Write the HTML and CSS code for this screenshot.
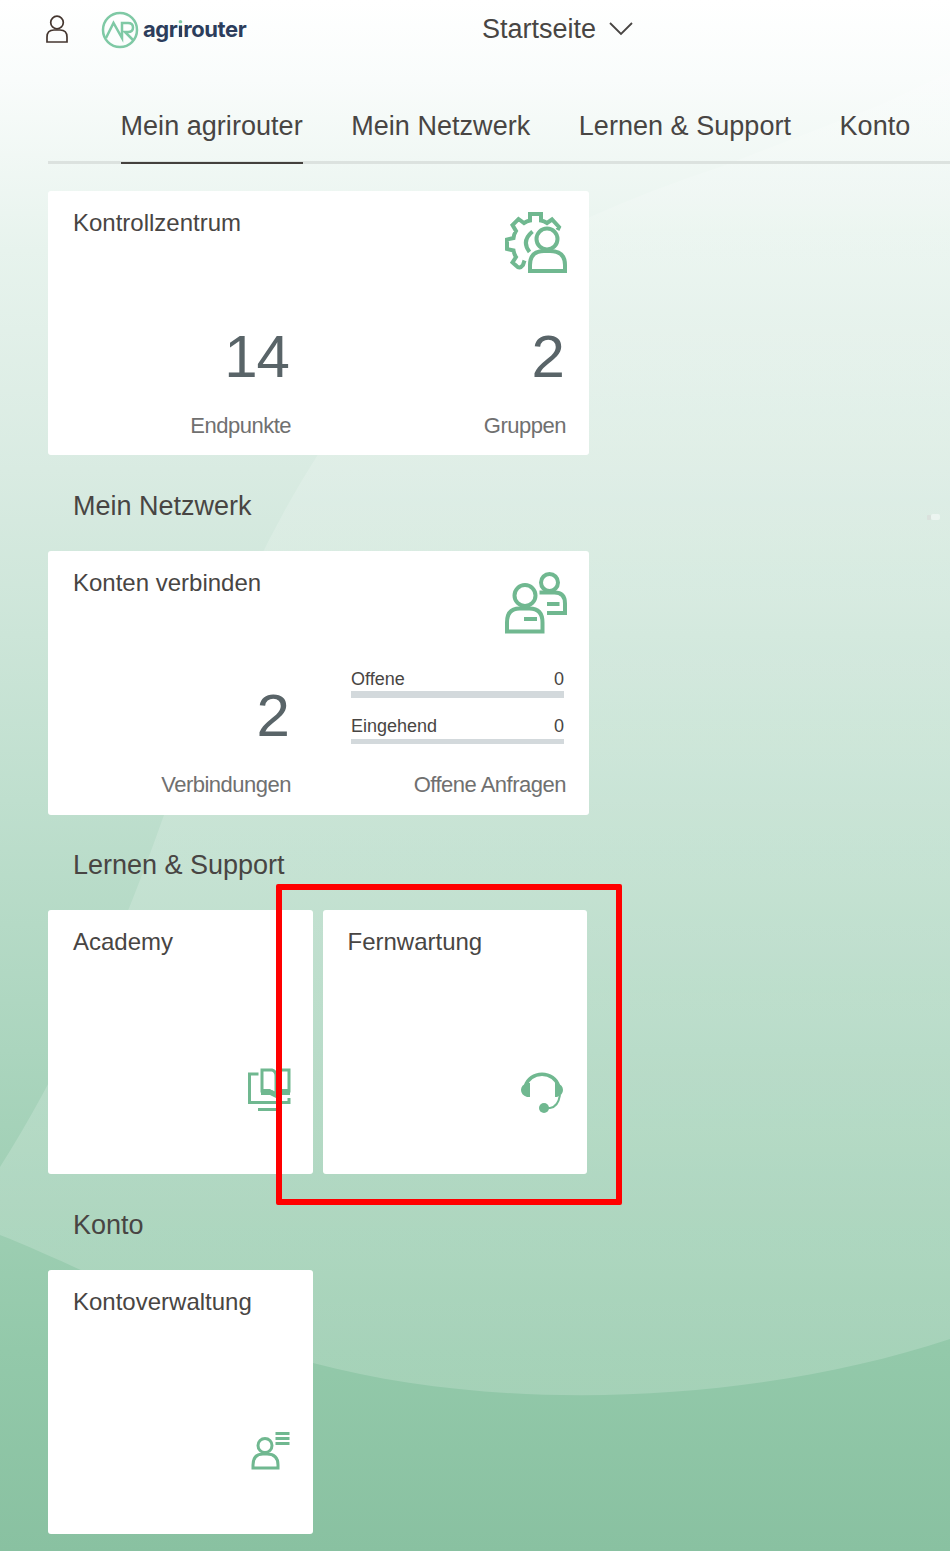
FILE: index.html
```html
<!DOCTYPE html>
<html lang="de">
<head>
<meta charset="utf-8">
<title>agrirouter – Startseite</title>
<link rel="stylesheet" href="styles.css">
</head>
<body>
<div class="page">
  <svg class="backdrop" viewBox="0 0 950 1551" aria-hidden="true">
    <defs>
      <linearGradient id="veil" x1="0" y1="0" x2="0" y2="1">
        <stop offset="0" stop-color="#fff" stop-opacity=".15"/>
        <stop offset="1" stop-color="#fff" stop-opacity=".18"/>
      </linearGradient>
    </defs>
    <path fill="url(#veil)" d="M0 1167Q90 1025 164 815Q225 600 317 456Q405 300 590 217Q650 190 720 167L880 105 950 72V1339C760 1402 510 1415 313 1363C190 1327 80 1266 0 1235Z"/>
    <rect x="931" y="514" width="9" height="6" rx="2" fill="#fff" opacity=".45"/>
    <rect x="927" y="515" width="4" height="5" rx="1" fill="#d9d5d5" opacity=".5"/>
  </svg>
  <header class="header">
    <svg class="user" viewBox="0 0 24 30"><circle cx="12" cy="7.500" r="6.300"/><path d="M2 27v-5q0-7 7-7h6q7 0 7 7v5z"/></svg>
    <div class="brand">
      <svg class="brand-mark" viewBox="0 0 38 38"><circle cx="19" cy="19" r="17"/><path d="M5 27 12.500 12 21 27V12h6q5 0 5 4.500t-5 4.500h-3l8 8"/></svg>
      <span class="brand-name">agr<span class="i">i</span>router</span>
    </div>
    <div class="title">Startseite <svg class="chevron" viewBox="0 0 24 14"><path d="M1 1l11 11L23 1"/></svg></div>
  </header>
  <nav class="tabs">
    <a class="tab active">Mein agrirouter</a><a class="tab">Mein Netzwerk</a><a class="tab">Lernen &amp; Support</a><a class="tab">Konto</a>
  </nav>
  <main class="content">
    <section class="card wide">
      <div class="card-head"><h3>Kontrollzentrum</h3>
        <svg class="icon big" viewBox="0 0 64 64"><path d="M20.500 49.500 19 54Q15.500 58.500 12.500 55L8.500 51.500 12 46Q10 43 9.500 39.500L3 38V28.500L9.500 27Q10 23 12 20L8.500 14 14.500 8 20 12Q23 10 26 9.500V3H37V9.500Q40 10 43 12L48 8.500 55 16 53.500 19M28.500 20.500Q17 30 25.500 41"/><circle cx="43" cy="28" r="10.500"/><path d="M26 60V54Q26 40 40 40H46Q61 40 61 54V60Z"/></svg>
      </div>
      <div class="metrics"><div class="metric"><b>14</b><span>Endpunkte</span></div><div class="metric"><b>2</b><span>Gruppen</span></div></div>
    </section>
    <h2>Mein Netzwerk</h2>
    <section class="card wide">
      <div class="card-head"><h3>Konten verbinden</h3>
        <svg class="icon big" viewBox="0 0 64 64"><circle cx="21" cy="24.500" r="10.500"/><path d="M3 60.500V51.500Q3 37.500 15.500 37.500H25.500Q38.500 37.500 38.500 51.500V60.500ZM20 48H33"/><circle cx="45.500" cy="11.500" r="8.500"/><path d="M35.500 21.500H50.500Q61 21.500 61 32.500V42H43M43 33H55.500"/></svg>
      </div>
      <div class="metrics"><div class="metric"><b>2</b><span>Verbindungen</span></div>
        <div class="metric">
          <div class="bars"><div class="bar tall"><span>Offene</span><span>0</span></div><div class="bar"><span>Eingehend</span><span>0</span></div></div>
          <span>Offene Anfragen</span>
        </div>
      </div>
    </section>
    <h2>Lernen &amp; Support</h2>
    <div class="row">
      <section class="card"><h3>Academy</h3>
        <svg class="icon small" viewBox="0 0 46 46"><path d="M12.500 7H3.500V35.500H43V31M12 42.500H36"/><path d="M16 3H26Q30 4 30 9V27Q26 24 22 24H16ZM30 9Q31 3 36 3H43V24H38Q33 24 30 27"/><path class="solid" d="M15 22h9l6 4 6-4h8v6h-8l-6 3-6-3h-9z"/></svg>
      </section>
      <section class="card"><h3>Fernwartung</h3>
        <svg class="icon small headset" viewBox="0 0 46 46"><path d="M6.500 19A17 15.500 0 0 1 39.500 19"/><path class="cord" d="M41 28Q39 40 31 41H26"/><path class="solid" d="M11 16v14H8Q2 28 2 23t6-7zM36 16v14h2q6-2 6-7t-6-7z"/><circle class="solid" cx="25" cy="41" r="5"/></svg>
      </section>
      <div class="highlight"></div>
    </div>
    <h2>Konto</h2>
    <section class="card"><h3>Kontoverwaltung</h3>
      <svg class="icon small" viewBox="0 0 46 46"><circle cx="19" cy="18.500" r="7"/><path d="M7 41V38Q7 27 17 27H21Q32 27 32 38V41ZM29.500 6.500H43.500M29.500 11.500H43.500M29.500 16.500H43.500"/></svg>
    </section>
  </main>
</div>
</body>
</html>
```
FILE: styles.css
```css
* { box-sizing: border-box; }
body { margin: 0; font-family: "Liberation Sans", Arial, sans-serif; color: #484543; }
h2, h3 { margin: 0; font-weight: 400; }
svg { display: block; fill: none; flex: none; }
.page {
  position: relative; height: 1551px; overflow: hidden;
  background: linear-gradient(180deg, #fff 0, #f9fcfb 80px, #e7f3ed 250px, #d9ebe2 470px, #bfdfce 800px, #abd5be 1050px, #93c9aa 1350px, #89c1a1 1551px);
}
.backdrop { position: absolute; inset: 0; width: 950px; height: 1551px; }
.header { position: relative; height: 60px; display: flex; align-items: center; padding-left: 45px; }
.user { width: 24px; height: 30px; stroke: #44362f; stroke-width: 1.7; }
.brand { display: flex; align-items: center; margin-left: 32px; gap: 4px; width: 381px; }
.brand-mark { width: 38px; height: 38px; stroke: #7fc9a5; stroke-width: 2.5; }
.brand-name { font: 700 22px/30px Inter, sans-serif; color: #2c3d5c; letter-spacing: -.4px; margin-top: -3px; }
.i { background: linear-gradient(#7fc9a5 0 10px, #2c3d5c 10px); -webkit-background-clip: text; background-clip: text; color: transparent; }
.title { display: flex; align-items: center; gap: 13px; font-size: 27px; line-height: 30px; margin-top: -3px; }
.chevron { width: 24px; height: 14px; stroke: #484543; stroke-width: 1.8; }
.tabs { position: relative; display: flex; gap: 48.5px; margin-left: 48px; padding-left: 72.5px; padding-top: 46px; height: 104px; border-bottom: 3px solid #dce2df; }
.tab { height: 58px; padding-top: 5px; font-size: 27px; line-height: 30px; letter-spacing: .04px; white-space: nowrap; }
.active { border-bottom: 2px solid #44403d; }
.content { position: relative; padding: 27px 0 0 48.4px; }
.card { background: #fff; border-radius: 3px; width: 264.5px; height: 264px; padding: 18px 21px 0 24.6px; }
.wide { width: 540.5px; }
h3 { font-size: 24px; line-height: 28px; white-space: nowrap; }
h2 { font-size: 27px; line-height: 30px; height: 95.6px; padding: 35.5px 0 0 24.5px; }
.card-head { display: flex; justify-content: space-between; height: 105.5px; }
.icon { stroke: #70b890; stroke-width: 4; }
.solid { fill: #70b890; stroke: none; }
.big { width: 64px; height: 64px; margin-top: 2px; }
.small { width: 46px; height: 46px; margin: 111px 0 0 auto; stroke-width: 3; }
.headset { margin-right: 1px; stroke-width: 3.5; }
.headset .cord { stroke-width: 2; }
.metrics { display: grid; grid-template-columns: 216px 213px; column-gap: 62px; }
.metric { display: flex; flex-direction: column; align-items: flex-end; }
.metric b { font-size: 60px; line-height: 84px; height: 97.4px; font-weight: 400; color: #596468; letter-spacing: -1px; }
.metric > span { font-size: 22px; line-height: 28px; letter-spacing: -.5px; color: #707070; margin-right: -2px; white-space: nowrap; }
.bars { width: 213px; height: 97.4px; }
.bar { display: flex; justify-content: space-between; height: 28px; font-size: 18px; line-height: 20px; border-bottom: 5px solid #d3d9dc; margin-top: 18px; }
.tall { height: 29px; border-bottom-width: 7px; margin-top: -5px; }
.row { position: relative; display: flex; gap: 10px; }
.highlight { position: absolute; left: 228px; top: -26.5px; width: 345.5px; height: 321px; border: 6px solid #f00; border-radius: 2px; }
```
